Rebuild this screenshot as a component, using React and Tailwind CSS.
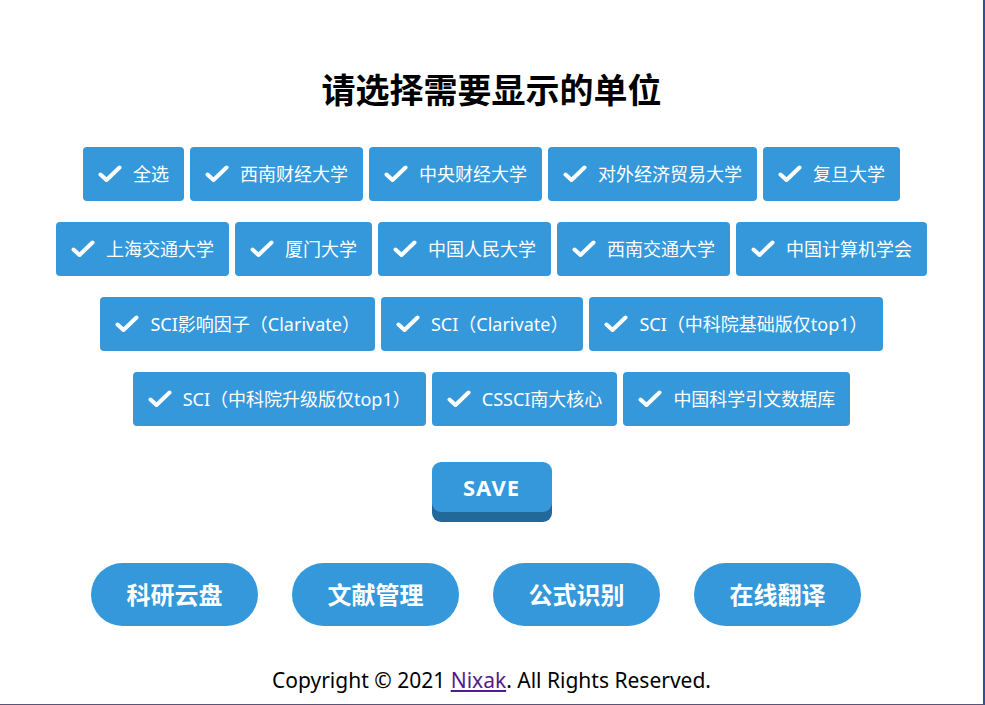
import React, { useState } from 'react';

const rows = [
  ['全选', '西南财经大学', '中央财经大学', '对外经济贸易大学', '复旦大学'],
  ['上海交通大学', '厦门大学', '中国人民大学', '西南交通大学', '中国计算机学会'],
  ['SCI影响因子（Clarivate）', 'SCI（Clarivate）', 'SCI（中科院基础版仅top1）'],
  ['SCI（中科院升级版仅top1）', 'CSSCI南大核心', '中国科学引文数据库'],
];

const tools = ['科研云盘', '文献管理', '公式识别', '在线翻译'];

const font = { fontFamily: '"Noto Sans", "Noto Sans CJK SC", sans-serif' };

const CheckIcon = () => (
  <svg width="24" height="18" viewBox="0 0 24 18" className="shrink-0">
    <polyline
      points="2.5,9.5 8.5,15 21.5,2.5"
      fill="none"
      stroke="white"
      strokeWidth="4"
      strokeLinecap="round"
      strokeLinejoin="round"
    />
  </svg>
);

const App = () => {
  const [checked, setChecked] = useState(() => rows.flat());

  const toggle = (name) => {
    setChecked((prev) => (prev.includes(name) ? prev.filter((n) => n !== name) : [...prev, name]));
  };

  return (
    <div
      className="w-[985px] h-[705px] bg-white border-r-2 border-b border-r-[#34508f] border-b-[#5a5478] flex flex-col items-center overflow-hidden"
      style={font}
    >
      <h1 className="mt-[70px] text-[34px] leading-[40px] font-bold text-black">请选择需要显示的单位</h1>

      {/* unit chips */}
      <div className="mt-[37px] flex flex-col items-center gap-[21px]">
        {rows.map((row, i) => (
          <div key={i} className="flex gap-[6px] justify-center">
            {row.map((name) => (
              <button
                key={name}
                type="button"
                onClick={() => toggle(name)}
                className="h-[54px] flex items-center gap-[11px] px-[15px] bg-[#3498db] rounded-[4px] text-white text-[18px] whitespace-nowrap"
              >
                <span className={checked.includes(name) ? '' : 'opacity-0'}>
                  <CheckIcon />
                </span>
                {name}
              </button>
            ))}
          </div>
        ))}
      </div>

      <button
        type="button"
        className="mt-[36px] w-[120px] h-[50px] rounded-[9px] bg-[#3498db] text-white text-[22px] font-bold tracking-[1px] shadow-[0_10px_0_#22699a]"
      >
        SAVE
      </button>

      {/* tool links */}
      <div className="mt-[51px] flex gap-[34px] pr-[31px]">
        {tools.map((t) => (
          <a
            key={t}
            href="#"
            className="w-[167px] h-[63px] rounded-full bg-[#3498db] text-white text-[24px] font-bold flex items-center justify-center"
          >
            {t}
          </a>
        ))}
      </div>

      <p className="mt-[39px] text-[21px] leading-[30px] text-black">
        Copyright © 2021{' '}
        <a href="#" className="text-[#551a8b] underline">
          Nixak
        </a>
        . All Rights Reserved.
      </p>
    </div>
  );
};

export default App;
